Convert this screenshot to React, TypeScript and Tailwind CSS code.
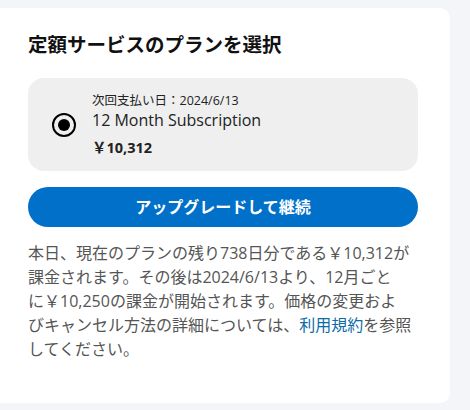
export default function App() {
  const font = { fontFamily: '"Open Sans", "Noto Sans CJK JP", sans-serif' }

  return (
    <div className="min-h-[410px] w-[470px] bg-[#f4f5f9] pt-2" style={font}>
      <div className="w-[450px] h-[395px] rounded-r-[10px] bg-white pl-7 pr-8 pt-[24px]">
        <h1 className="text-[19.5px] font-bold leading-[26px] text-[#111]">定額サービスのプランを選択</h1>

        {/* selected plan */}
        <div className="mt-[20px] flex h-[93px] w-[390px] items-center rounded-[16px] bg-[#efefef] pl-6">
          <div className="flex h-[24px] w-[24px] items-center justify-center rounded-full border-[2.5px] border-black">
            <div className="h-[12px] w-[12px] rounded-full bg-black" />
          </div>
          <div className="ml-4 flex flex-col">
            <span className="text-[12.5px] leading-[16px] text-[#222]">次回支払い日：2024/6/13</span>
            <span className="text-[16px] leading-[22px] text-[#222]">12 Month Subscription</span>
            <span className="mt-[7px] text-[14.5px] font-bold leading-[19px] text-[#222]">￥10,312</span>
          </div>
        </div>

        <button className="mt-4 flex h-[40px] w-[390px] items-center justify-center rounded-full bg-[#0070c9] text-[16px] font-bold text-white">
          アップグレードして継続
        </button>

        <p className="mt-[14px] w-[400px] text-[16px] leading-[24px] text-[#555]">
          本日、現在のプランの残り738日分である￥10,312が
          <br />
          課金されます。その後は2024/6/13より、12月ごと
          <br />
          に￥10,250の課金が開始されます。価格の変更およ
          <br />
          びキャンセル方法の詳細については、<a className="text-[#0b6aa8]">利用規約</a>を参照
          <br />
          してください。
        </p>
      </div>
    </div>
  )
}
